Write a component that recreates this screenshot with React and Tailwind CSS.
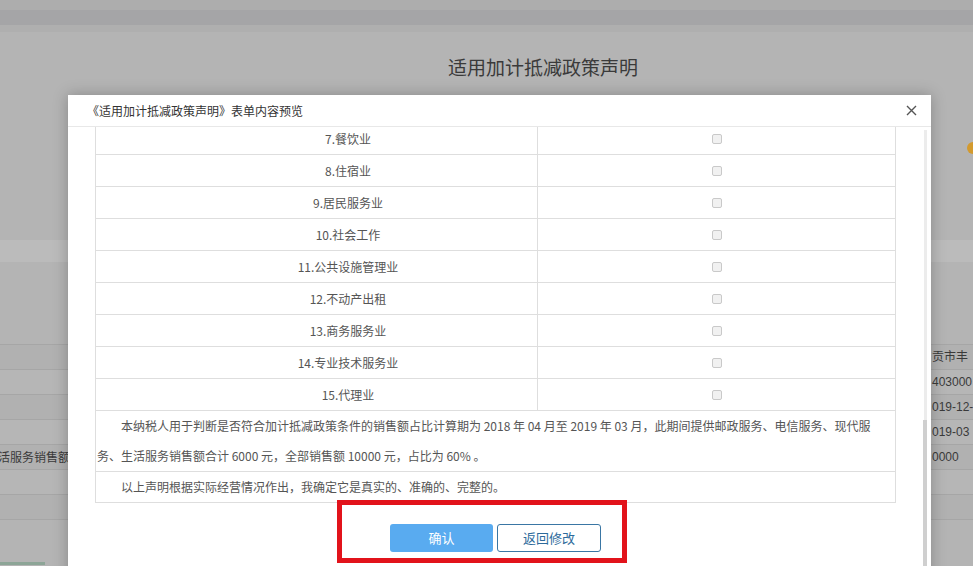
import React from 'react'

const rows = [
  '7.餐饮业',
  '8.住宿业',
  '9.居民服务业',
  '10.社会工作',
  '11.公共设施管理业',
  '12.不动产出租',
  '13.商务服务业',
  '14.专业技术服务业',
  '15.代理业',
]

const bgRows = [
  { left: '', right: '贡市丰' },
  { left: '', right: '403000' },
  { left: '', right: '019-12-' },
  { left: '', right: '019-03' },
  { left: '生活服务销售额', right: '0000' },
  { left: '', right: '' },
  { left: '', right: '' },
]

function Checkbox() {
  return <span className="block w-[10px] h-[10px] border border-[#c9c9c9] bg-[#f1f1f1] rounded-[2px]" />
}

export default function App() {
  return (
    <div className="relative w-[973px] h-[566px] overflow-hidden bg-[#b4b4b4] font-['Noto_Sans_CJK_SC',sans-serif]">
      {/* page behind the overlay */}
      <div className="h-[10px] bg-[#adadad]" />
      <div className="h-[15px] bg-[#a5a5a7]" />
      <div className="h-[7px] bg-[#afafaf]" />
      <div className="relative h-[208px] pt-[21px] pl-[448px]">
        <h1 className="text-[19px] leading-[28px] text-[#3a3a3a] whitespace-nowrap">适用加计抵减政策声明</h1>
        <span className="absolute left-[967px] top-[110px] w-[12px] h-[12px] rounded-full bg-[#d39a2e]" />
      </div>
      <div className="h-[22px] bg-[#bbbbbb]" />
      <div className="h-[83px] border-b border-[#a6a6a6]" />
      {bgRows.map((r, i) => (
        <div
          key={i}
          className={`grid grid-cols-[70px_1fr_42px] h-[25px] border-b border-[#a6a6a6] text-[12px] leading-[24px] text-[#3a3a3a] ${
            i % 2 === 0 ? 'bg-[#b1b1b1]' : 'bg-[#b6b6b6]'
          }`}
        >
          <span className="flex justify-end overflow-hidden whitespace-nowrap">
            <span className="shrink-0">{r.left}</span>
          </span>
          <span />
          <span className="pl-[1px] overflow-hidden whitespace-nowrap font-['Liberation_Sans','Noto_Sans_CJK_SC',sans-serif]">
            {r.right}
          </span>
        </div>
      ))}
      <div className="h-[42px]" />
      <div className="w-[45px] h-[3px] bg-[#8da597]" />

      {/* modal */}
      <div className="absolute left-[68px] top-[95px] w-[863px] h-[490px] bg-white shadow-[0_0_14px_rgba(0,0,0,0.25)] flex flex-col">
        <div className="h-[32px] shrink-0 border-b border-[#e8e8e8] flex items-center justify-between pl-[19px] pr-[14px]">
          <span className="text-[12px] text-[#333] whitespace-nowrap">《适用加计抵减政策声明》表单内容预览</span>
          <svg width="11" height="11" viewBox="0 0 11 11" className="text-[#555]">
            <path d="M1 1L10 10M10 1L1 10" stroke="currentColor" strokeWidth="1.4" />
          </svg>
        </div>

        <div className="relative flex-1 overflow-hidden pl-[27px]">
          <div className="-mt-[5px] w-[801px] border-x border-b border-[#dedede] text-[12px] text-[#555]">
            {rows.map((label) => (
              <div key={label} className="grid grid-cols-[442px_1fr] h-[32px] border-t border-[#dedede]">
                <div className="flex items-center justify-center pl-[63px] border-r border-[#dedede]">{label}</div>
                <div className="flex items-center justify-center">
                  <Checkbox />
                </div>
              </div>
            ))}
            <div className="border-t border-[#dedede] leading-[30px] pl-[1px] whitespace-nowrap">
              <p className="indent-[24px]">
                本纳税人用于判断是否符合加计抵减政策条件的销售额占比计算期为 2018 年 04 月至 2019 年 03 月，此期间提供邮政服务、电信服务、现代服
              </p>
              <p>务、生活服务销售额合计 6000 元，全部销售额 10000 元，占比为 60% 。</p>
            </div>
            <div className="border-t border-[#dedede] leading-[30px] pl-[25px]">
              以上声明根据实际经营情况作出，我确定它是真实的、准确的、完整的。
            </div>
          </div>

          <div className="w-[801px] mt-[21px] flex justify-center gap-[4px] text-[13px]">
            <button className="w-[103px] h-[28px] rounded-[3px] bg-[#59abf0] text-white">确认</button>
            <button className="w-[104px] h-[28px] rounded-[3px] border border-[#3a76a4] text-[#2d6a9b] bg-white">
              返回修改
            </button>
          </div>

          {/* scrollbar */}
          <div className="absolute right-[4px] top-[3px] w-[3px] h-[290px] bg-[#ececec]" />
          <div className="absolute right-[4px] top-[293px] w-[4px] h-[200px] bg-[#cfcfcf]" />
        </div>
      </div>

      {/* annotation */}
      <div className="absolute left-[337px] top-[500px] w-[290px] h-[63px] border-[5px] border-[#e2131b]" />
    </div>
  )
}
